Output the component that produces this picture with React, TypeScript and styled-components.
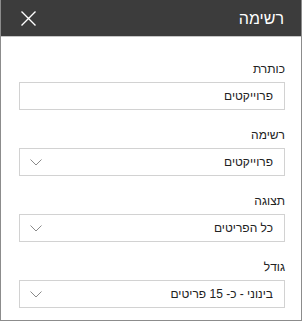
import * as React from "react";
import styled, {createGlobalStyle} from "styled-components";

const GlobalStyle = createGlobalStyle`
    html, body {
        margin: 0;
        padding: 0;
        background: #fff;
    }
    body {
        font-family: "Liberation Sans", "DejaVu Sans", sans-serif;
    }
`;

const Panel = styled.div`
    direction: rtl;
    width: 302px;
    height: 321px;
    box-sizing: border-box;
    border: 1px solid #8c8c8c;
    border-top: none;
    background: #fff;
    display: flex;
    flex-direction: column;
`;

const Header = styled.div`
    height: 36px;
    background: #3c3c3c;
    border-bottom: 1px solid #c6c6c6;
    display: flex;
    align-items: center;
    justify-content: space-between;
    padding: 0 17px 0 19px;
    flex-shrink: 0;
`;

const Title = styled.div`
    color: #fff;
    font-size: 16px;
    line-height: 20px;
    padding-top: 1px;
`;

const CloseButton = styled.button`
    background: none;
    border: none;
    padding: 0;
    width: 16px;
    height: 16px;
    display: flex;
    align-items: center;
    justify-content: center;
    cursor: pointer;
`;

const Body = styled.div`
    display: flex;
    flex-direction: column;
    gap: 16px;
    padding: 23px 16px 0 18px;
`;

const Field = styled.div`
    display: flex;
    flex-direction: column;
    gap: 4px;
`;

const Label = styled.label`
    font-size: 12px;
    line-height: 18px;
    color: #222;
`;

const Box = styled.div`
    height: 28px;
    box-sizing: border-box;
    border: 1px solid #d2d2d2;
    display: flex;
    align-items: center;
    justify-content: space-between;
    padding: 0 11px 0 10px;
    font-size: 12px;
    color: #222;
`;

const Chevron = () => (
    <svg width="12" height="7" viewBox="0 0 12 7">
        <path d="M0.5 0.5 L6 6 L11.5 0.5" fill="none" stroke="#8a8a8a" strokeWidth="1" />
    </svg>
);

const CloseIcon = () => (
    <svg width="15" height="15" viewBox="0 0 15 15">
        <path d="M0.5 0.5 L14.5 14.5 M14.5 0.5 L0.5 14.5" stroke="#fff" strokeWidth="1.4" />
    </svg>
);

interface FieldProps {
    label: string;
    value: string;
    dropdown?: boolean;
}

const FormField = ({label, value, dropdown}: FieldProps) => (
    <Field>
        <Label>{label}</Label>
        <Box>
            <span>{value}</span>
            {dropdown && <Chevron />}
        </Box>
    </Field>
);

export default function App() {
    return (
        <>
            <GlobalStyle />
            <Panel>
                <Header>
                    <Title>רשימה</Title>
                    <CloseButton aria-label="סגור"><CloseIcon /></CloseButton>
                </Header>
                <Body>
                    <FormField label="כותרת" value="פרוייקטים" />
                    <FormField label="רשימה" value="פרוייקטים" dropdown />
                    <FormField label="תצוגה" value="כל הפריטים" dropdown />
                    <FormField label="גודל" value="בינוני - כ- 15 פריטים" dropdown />
                </Body>
            </Panel>
        </>
    );
}
